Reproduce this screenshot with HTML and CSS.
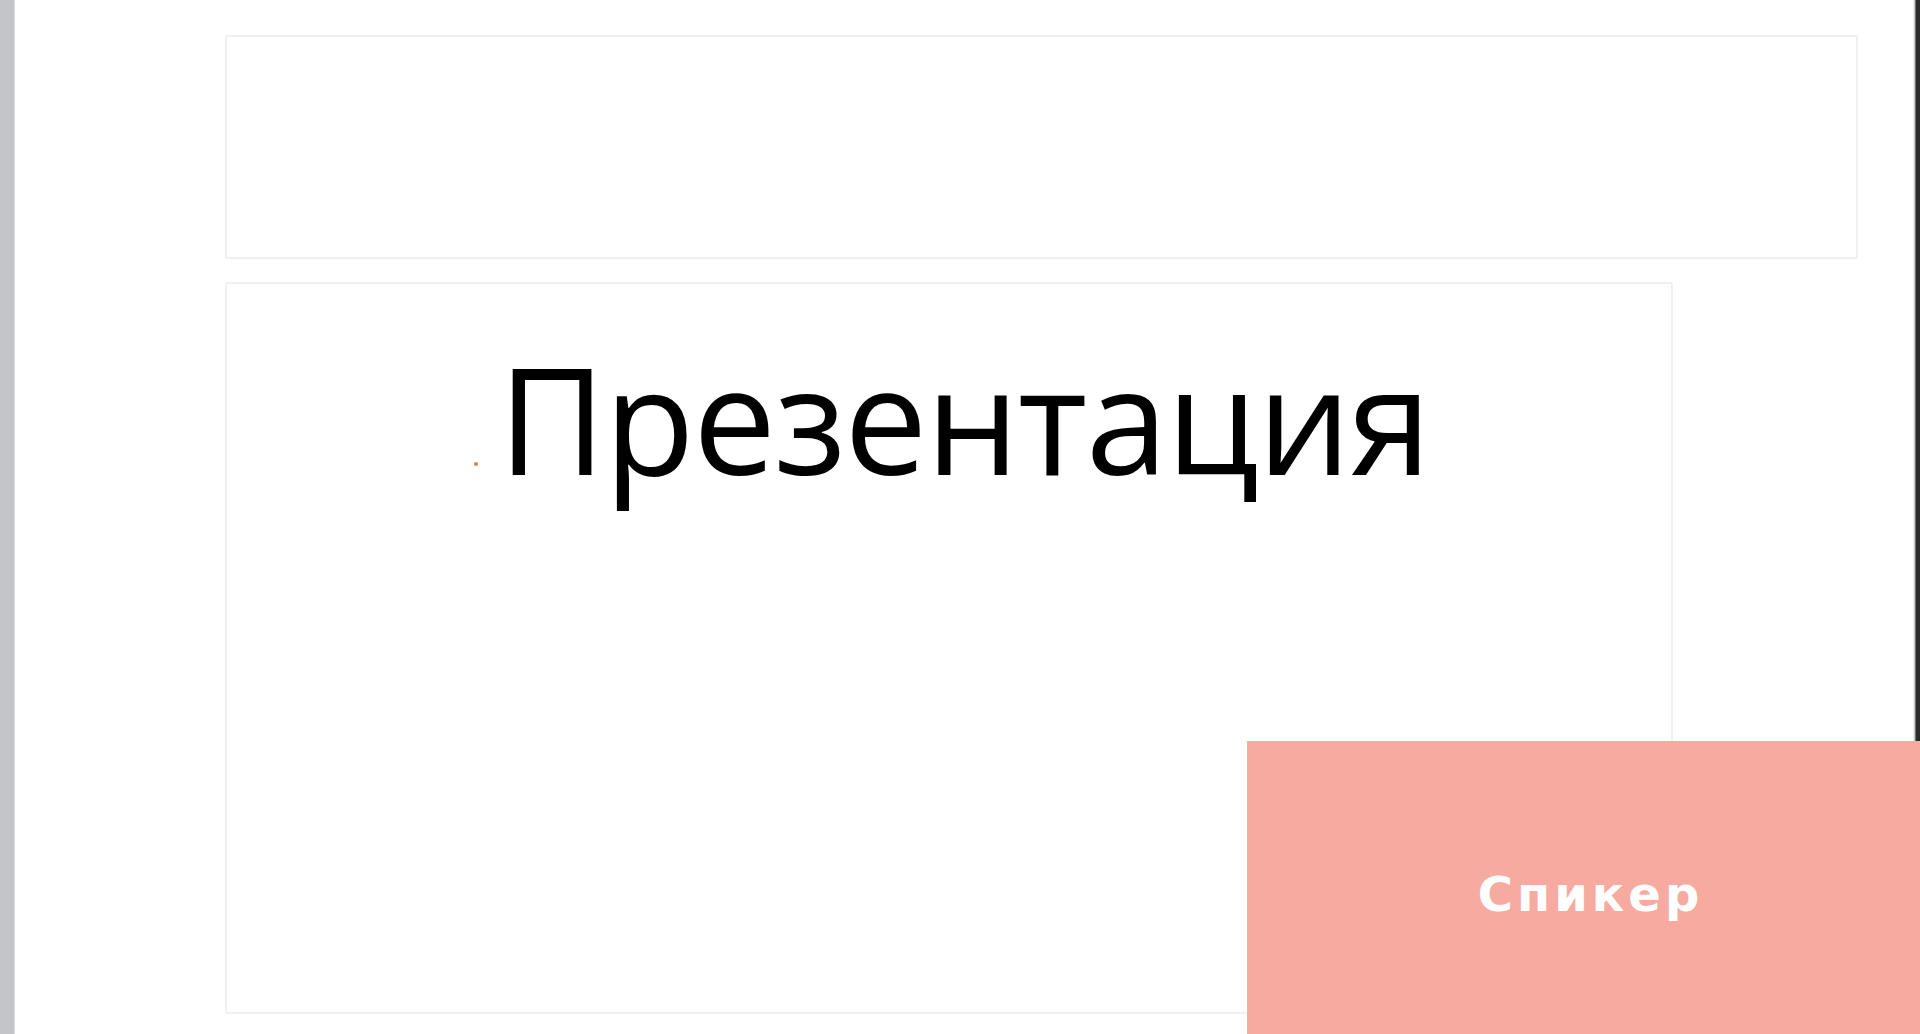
FILE: index.html
```html
<!DOCTYPE html>
<html lang="ru">
<head>
<meta charset="utf-8">
<title>Презентация</title>
<link rel="stylesheet" href="styles.css">
</head>
<body>
<div class="app">
  <div class="side-bar"></div>
  <main class="stage">
    <section class="card card-top"></section>
    <section class="card card-slide">
      <div class="slide-title">
        <span class="marker"></span>
        <span class="title-text">Презентация</span>
      </div>
    </section>
  </main>
  <div class="edge-strip"></div>
</div>
<div class="speaker">
  <span class="speaker-label">Спикер</span>
</div>
</body>
</html>
```

FILE: styles.css
```css
* { box-sizing: border-box; }

html, body {
  margin: 0;
  padding: 0;
  width: 1920px;
  height: 1034px;
  overflow: hidden;
  background: #ffffff;
}

.app {
  display: flex;
  width: 1920px;
  height: 1034px;
}

.side-bar {
  width: 15px;
  flex: none;
  background: #c4c5c9;
  border-right: 1px solid #dcdde0;
}

.stage {
  flex: 1;
  display: flex;
  flex-direction: column;
  gap: 23px;
  padding: 35px 0 0 210px;
}

.card {
  background: #ffffff;
  border: 2px solid #f0f0f0;
  border-radius: 2px;
}

.card-top {
  width: 1633px;
  height: 224px;
}

.card-slide {
  width: 1448px;
  height: 732px;
  padding-top: 33px;
}

.slide-title {
  display: flex;
  justify-content: center;
  align-items: baseline;
  padding-left: 6px;
}

.marker {
  width: 4px;
  height: 4px;
  border-radius: 50%;
  background: #e0823c;
  margin-right: 20px;
  position: relative;
  top: -9px;
}

.title-text {
  font-family: "Open Sans", "Noto Sans", sans-serif;
  font-size: 148px;
  font-weight: 400;
  color: #000000;
  letter-spacing: -1.7px;
  line-height: 1.36;
}

.edge-strip {
  width: 7px;
  flex: none;
  background: linear-gradient(to right, #ffffff 0, #b9b9b9 2px, #2b2b2b 3px, #2b2b2b 100%);
}

.speaker {
  position: fixed;
  right: 0;
  bottom: 0;
  width: 673px;
  height: 293px;
  background: #f7aa9f;
  display: flex;
  align-items: center;
  justify-content: center;
  padding-left: 14px;
  padding-top: 12px;
}

.speaker-label {
  font-family: "DejaVu Sans", sans-serif;
  font-weight: 700;
  font-size: 48px;
  color: #ffffff;
  letter-spacing: 4px;
}
```
